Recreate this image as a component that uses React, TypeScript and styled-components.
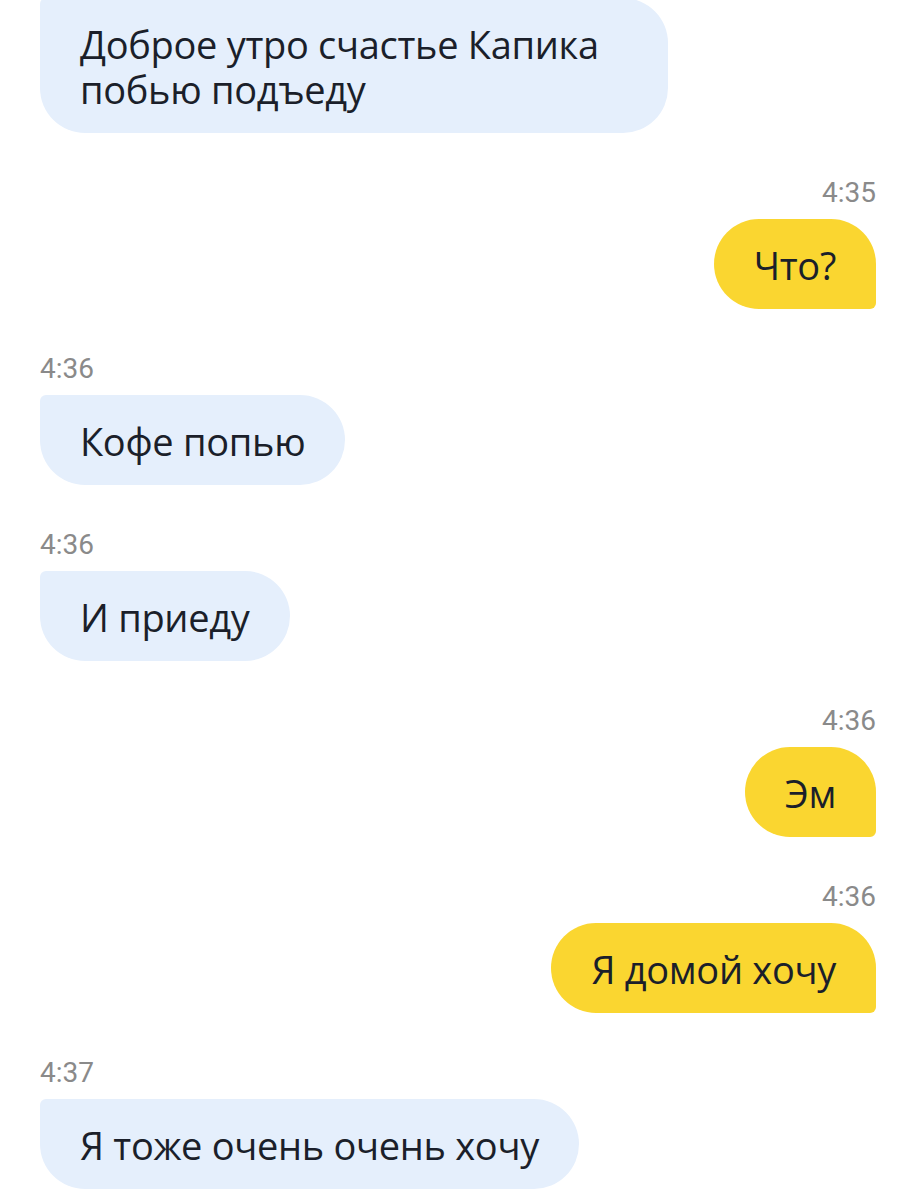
import React from "react";
import styled, { createGlobalStyle } from "styled-components";

const Global = createGlobalStyle`
  html, body { margin: 0; padding: 0; background: #ffffff; }
  body { font-family: "Open Sans", "Noto Sans", sans-serif; overflow: hidden; }
`;

const Page = styled.div`
  width: 924px;
  height: 1200px;
  overflow: hidden;
  background: #ffffff;
  box-sizing: border-box;
  padding: 0 48px 0 40px;
`;

const Thread = styled.div`
  display: flex;
  flex-direction: column;
  gap: 45px;
  margin-top: -2px;
`;

const Group = styled.div<{ $out?: boolean }>`
  display: flex;
  flex-direction: column;
  align-items: ${(p) => (p.$out ? "flex-end" : "flex-start")};
`;

const Time = styled.div`
  font-family: Roboto, "Noto Sans", sans-serif;
  font-size: 28px;
  line-height: 30px;
  color: #8a8a8a;
  margin-bottom: 11px;
`;

const Bubble = styled.div<{ $out?: boolean }>`
  box-sizing: border-box;
  max-width: 628px;
  padding: 24px 40px 21px;
  font-family: "Open Sans", "Noto Sans", sans-serif;
  font-size: 38px;
  line-height: 45px;
  letter-spacing: -0.3px;
  color: #1b1f2a;
  background: ${(p) => (p.$out ? "#fad630" : "#e5effc")};
  border-radius: ${(p) => (p.$out ? "45px 45px 6px 45px" : "6px 45px 45px 45px")};
`;

type Msg = { time?: string; text: string; out?: boolean };

const messages: Msg[] = [
  { text: "Доброе утро счастье Капика побью подъеду" },
  { time: "4:35", text: "Что?", out: true },
  { time: "4:36", text: "Кофе попью" },
  { time: "4:36", text: "И приеду" },
  { time: "4:36", text: "Эм", out: true },
  { time: "4:36", text: "Я домой хочу", out: true },
  { time: "4:37", text: "Я тоже очень очень хочу" },
];

export default function App() {
  return (
    <>
      <Global />
      <Page>
        <Thread>
          {messages.map((m, i) => (
            <Group key={i} $out={m.out}>
              {m.time && <Time>{m.time}</Time>}
              <Bubble $out={m.out}>{m.text}</Bubble>
            </Group>
          ))}
        </Thread>
      </Page>
    </>
  );
}
